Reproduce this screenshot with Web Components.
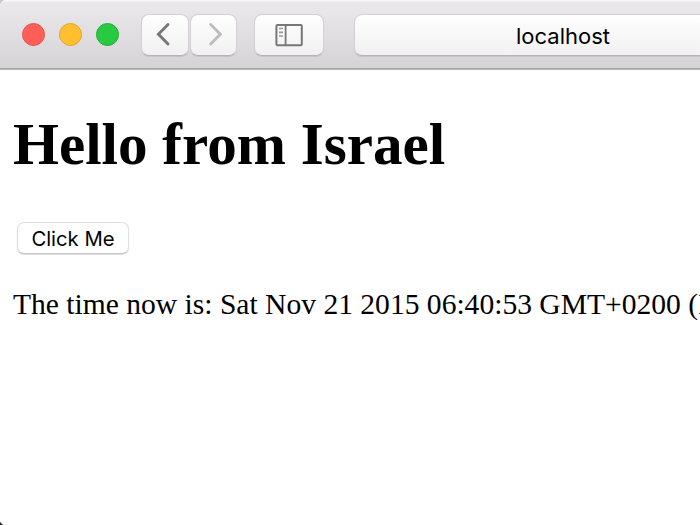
<!DOCTYPE html>
<html lang="en">
<head>
<meta charset="utf-8">
<title>localhost</title>
<style>
html, body { margin: 0; height: 100%; overflow: hidden; background: #fff; }
</style>
</head>
<body>
<browser-window>
  <browser-toolbar slot="toolbar">
    <traffic-lights></traffic-lights>
    <nav-buttons></nav-buttons>
    <sidebar-button></sidebar-button>
    <address-bar>localhost</address-bar>
  </browser-toolbar>
  <hello-page>
    <span slot="title">Hello from Israel</span>
    <push-button slot="action">Click Me</push-button>
    <span slot="time">The time now is: Sat Nov 21 2015 06:40:53 GMT+0200 (IST)</span>
  </hello-page>
</browser-window>
<script>
const define = (name, html) => customElements.define(name, class extends HTMLElement {
  constructor() {
    super();
    this.attachShadow({ mode: 'open' }).innerHTML = html;
  }
});

const face = `background: linear-gradient(#fefefe, #f1f1f1); border: 1px solid #d3d1d4; border-bottom-color: #b5b4b6; box-shadow: 0 1px 0 #c6c4c7; box-sizing: border-box;`;

define('browser-window', `<style>
:host { display: flex; flex-direction: column; width: 700px; height: 525px; overflow: hidden; position: relative; background: #fff; }
.corner { position: absolute; left: 0; width: 7px; height: 7px; pointer-events: none; }
.top { top: 0; background: radial-gradient(circle at 100% 100%, transparent 7px, #bdcbd5 8px); }
.bottom { bottom: 0; background: radial-gradient(circle at 100% 0, transparent 7.3px, #202a33 8.3px); }
</style><slot name="toolbar"></slot><slot></slot><div class="corner top"></div><div class="corner bottom"></div>`);

define('browser-toolbar', `<style>
:host { display: flex; align-items: flex-start; flex: none; box-sizing: border-box; height: 70px; padding: 14px 0 0 22px; border-bottom: 1px solid #b9b8ba;
  background: linear-gradient(#f8f7f8 0, #f8f7f8 1px, #ebe9ec 2px, #d5d3d6 68px, #a5a4a6 68px); }
</style><slot></slot>`);

define('traffic-lights', `<style>
:host { display: flex; gap: 14px; padding-top: 9px; width: 119px; box-sizing: border-box; flex: none; }
i { box-sizing: border-box; width: 23px; height: 23px; border-radius: 50%; border: 1px solid; }
.c { background: #ff5f58; border-color: #e7534d; }
.m { background: #ffbf2f; border-color: #e2a52d; }
.z { background: #29ca42; border-color: #1fb02e; }
</style><i class="c"></i><i class="m"></i><i class="z"></i>`);

define('nav-buttons', `<style>
:host { display: flex; gap: 1px; flex: none; padding-right: 17px; }
div { ${face} width: 48px; height: 42px; border-radius: 8px; }
div + div { width: 47px; }
svg { display: block; }
</style>
<div><svg width="46" height="40" fill="none" stroke="#777" stroke-width="2.9" stroke-linecap="round" stroke-linejoin="miter"><path d="M26 9.5 16.4 19.2 26 29"/></svg></div>
<div><svg width="45" height="40" fill="none" stroke="#bdbdbd" stroke-width="2.9" stroke-linecap="round" stroke-linejoin="miter"><path d="M19.7 9.5 29.3 19.2 19.7 29"/></svg></div>`);

define('sidebar-button', `<style>
:host { display: block; flex: none; padding-right: 30px; }
div { ${face} width: 70px; height: 42px; border-radius: 8px; }
svg { display: block; }
</style><div><svg width="68" height="40" fill="none"><rect x="21.4" y="9.9" width="25.4" height="20.4" rx="1" stroke="#777" stroke-width="2"/><path d="M30.6 10v20" stroke="#777" stroke-width="1.8"/><path d="M24 13.5h4M24 17.3h4M24 21h4" stroke="#999" stroke-width="1.7"/></svg></div>`);

define('address-bar', `<style>
:host { display: flex; align-items: center; justify-content: center; flex: none; width: 418px; height: 42px; border-radius: 8px; ${face}
  font: 22px/42px Inter, sans-serif; letter-spacing: 0; color: #000; padding-top: 2px; }
</style><span><slot></slot></span>`);

define('hello-page', `<style>
:host { display: block; padding: 0 0 0 13px; font: 29.57px/34px "Liberation Serif", serif; color: #000; white-space: nowrap; }
h1 { margin: 40px 0 0; font-size: 59.1px; line-height: 68px; font-weight: bold; }
.action { display: flex; margin: 44px 0 0 4px; }
p { margin: 33px 0 0; }
</style><h1><slot name="title"></slot></h1><div class="action"><slot name="action"></slot></div><p><slot name="time"></slot></p>`);

define('push-button', `<style>
:host { display: block; }
button { display: block; box-sizing: border-box; width: 112px; height: 32px; margin: 0; padding: 0; border: 1px solid #dedede; border-bottom-color: #c6c6c6; border-radius: 7px; background: #fff; box-shadow: 0 1px 1px #ddd; font: 20.3px/31px Inter, sans-serif; letter-spacing: 0; color: #000; white-space: nowrap; }
</style><button type="button"><slot></slot></button>`);
</script>
</body>
</html>
